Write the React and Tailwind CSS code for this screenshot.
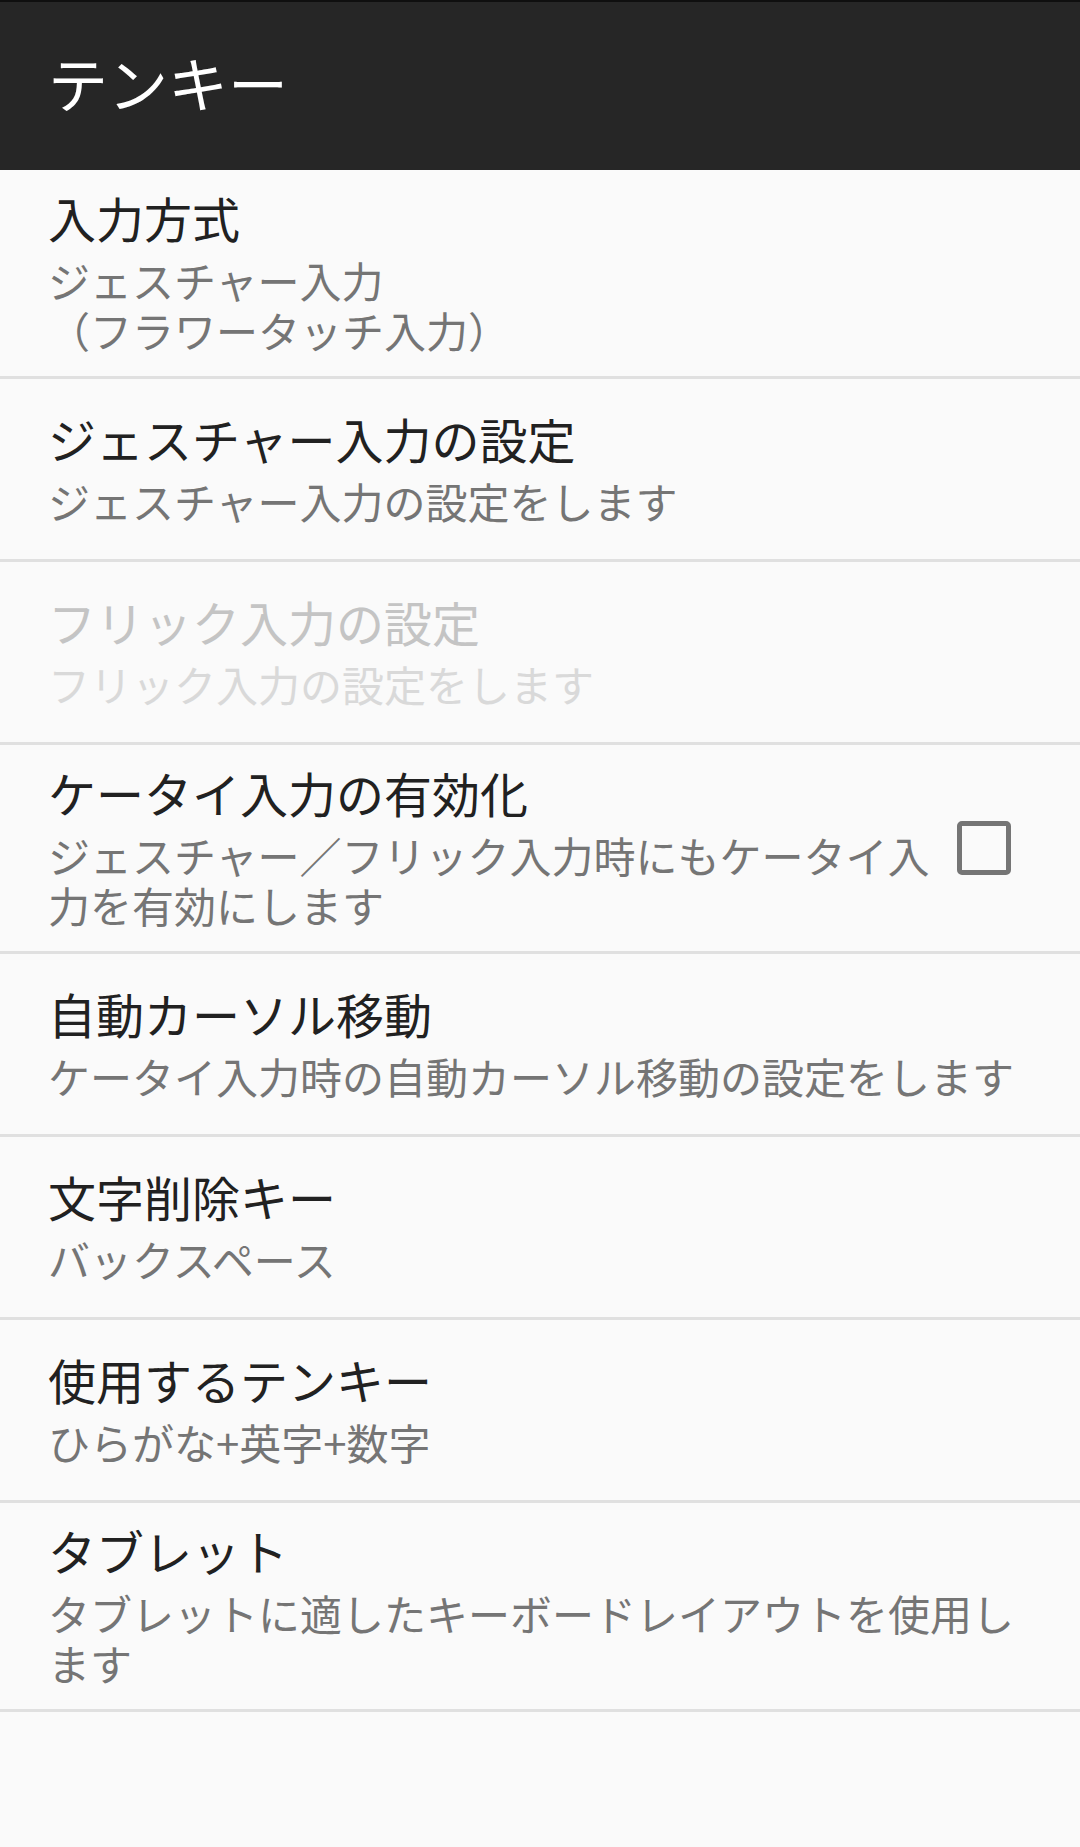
// App.jsx - テンキー settings screen
const font = { fontFamily: '"Noto Sans CJK JP", "Noto Sans", sans-serif' };

const items = [
    { title: '入力方式', summary: 'ジェスチャー入力\n（フラワータッチ入力）' },
    { title: 'ジェスチャー入力の設定', summary: 'ジェスチャー入力の設定をします' },
    { title: 'フリック入力の設定', summary: 'フリック入力の設定をします', disabled: true },
    { title: 'ケータイ入力の有効化', summary: 'ジェスチャー／フリック入力時にもケータイ入力を有効にします', checkbox: true },
    { title: '自動カーソル移動', summary: 'ケータイ入力時の自動カーソル移動の設定をします' },
    { title: '文字削除キー', summary: 'バックスペース' },
    { title: '使用するテンキー', summary: 'ひらがな+英字+数字' },
    { title: 'タブレット', summary: 'タブレットに適したキーボードレイアウトを使用します' },
];

const Checkbox = () => (
    <div className="ml-[21px] mr-[69px] w-[54px] h-[54px] shrink-0 rounded-[5px] border-[5px] border-[#757575]" />
);

function PrefRow({ title, summary, disabled, checkbox }) {
    return (
        <div className="flex items-center min-h-[183px] pt-[21px] pb-[21px] pl-[48px] border-b-[3px] border-[#e0e0e0]">
            <div className={`flex-1 min-w-0 ${checkbox ? '' : 'pr-[48px]'}`}>
                <div className={`text-[48px] leading-[52px] mb-[12px] ${disabled ? 'text-[#c4c4c4]' : 'text-[#212121]'}`}>
                    {title}
                </div>
                <div className={`text-[42px] leading-[50px] whitespace-pre-line ${disabled ? 'text-[#d9d9d9]' : 'text-[#757575]'}`}>
                    {summary}
                </div>
            </div>
            {checkbox && <Checkbox />}
        </div>
    );
}

export default function App() {
    return (
        <div className="w-[1080px] min-h-[1847px] bg-[#fafafa]" style={font}>
            <div className="h-[2px] bg-[#0f0f0f]" />
            <header className="h-[168px] bg-[#262626] flex items-center pl-[48px] pb-[8px]">
                <h1 className="text-[60px] leading-none text-white font-normal">テンキー</h1>
            </header>
            <div>
                {items.map((item) => (
                    <PrefRow key={item.title} {...item} />
                ))}
            </div>
        </div>
    );
}
